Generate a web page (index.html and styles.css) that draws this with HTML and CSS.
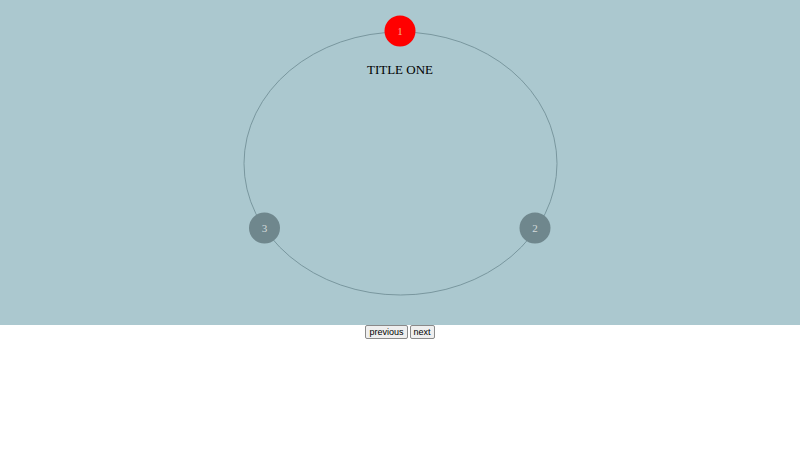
FILE: index.html
```html
<!DOCTYPE html>
<html>
<head>
<meta charset="utf-8">
<link rel="stylesheet" href="styles.css">
</head>
<body>
<div class="stage">
  <svg class="wheel" width="800" height="325" viewBox="0 0 800 325">
    <ellipse class="orbit" cx="400.5" cy="163.5" rx="156.5" ry="131.5"/>
    <text class="title" x="400" y="74" text-anchor="middle">TITLE ONE</text>
    <circle class="node active" cx="400" cy="31" r="15.5"/>
    <text class="num num-active" x="400" y="35" text-anchor="middle">1</text>
    <circle class="node" cx="535" cy="228" r="15.5"/>
    <text class="num" x="535" y="232" text-anchor="middle">2</text>
    <circle class="node" cx="264.5" cy="228" r="15.5"/>
    <text class="num" x="264.5" y="232" text-anchor="middle">3</text>
  </svg>
</div>
<div class="controls">
  <button class="btn">previous</button>
  <button class="btn">next</button>
</div>
</body>
</html>
```
FILE: styles.css
```css
html, body {
  margin: 0;
  padding: 0;
  background: #ffffff;
}
.stage {
  height: 325px;
  background: #abc8cf;
}
.wheel {
  display: block;
}
.orbit {
  fill: none;
  stroke: #6c8a92;
  stroke-width: 0.8;
}
.title {
  font-family: "Liberation Serif", serif;
  font-size: 13px;
  fill: #000000;
}
.node {
  fill: #6f878d;
}
.node.active {
  fill: #ff0000;
}
.num {
  font-family: "Liberation Serif", serif;
  font-size: 11px;
  fill: #d3dadb;
}
.num-active {
  fill: #f7b08c;
}
.controls {
  display: flex;
  justify-content: center;
  gap: 2px;
}
.btn {
  font-family: "Liberation Sans", Arial, sans-serif;
  font-size: 9px;
  line-height: 10px;
  padding: 1px 3px;
  margin: 0;
  border: 1px solid #8a8a8a;
  border-radius: 2px;
  background: #efefef;
  color: #000;
}
```
